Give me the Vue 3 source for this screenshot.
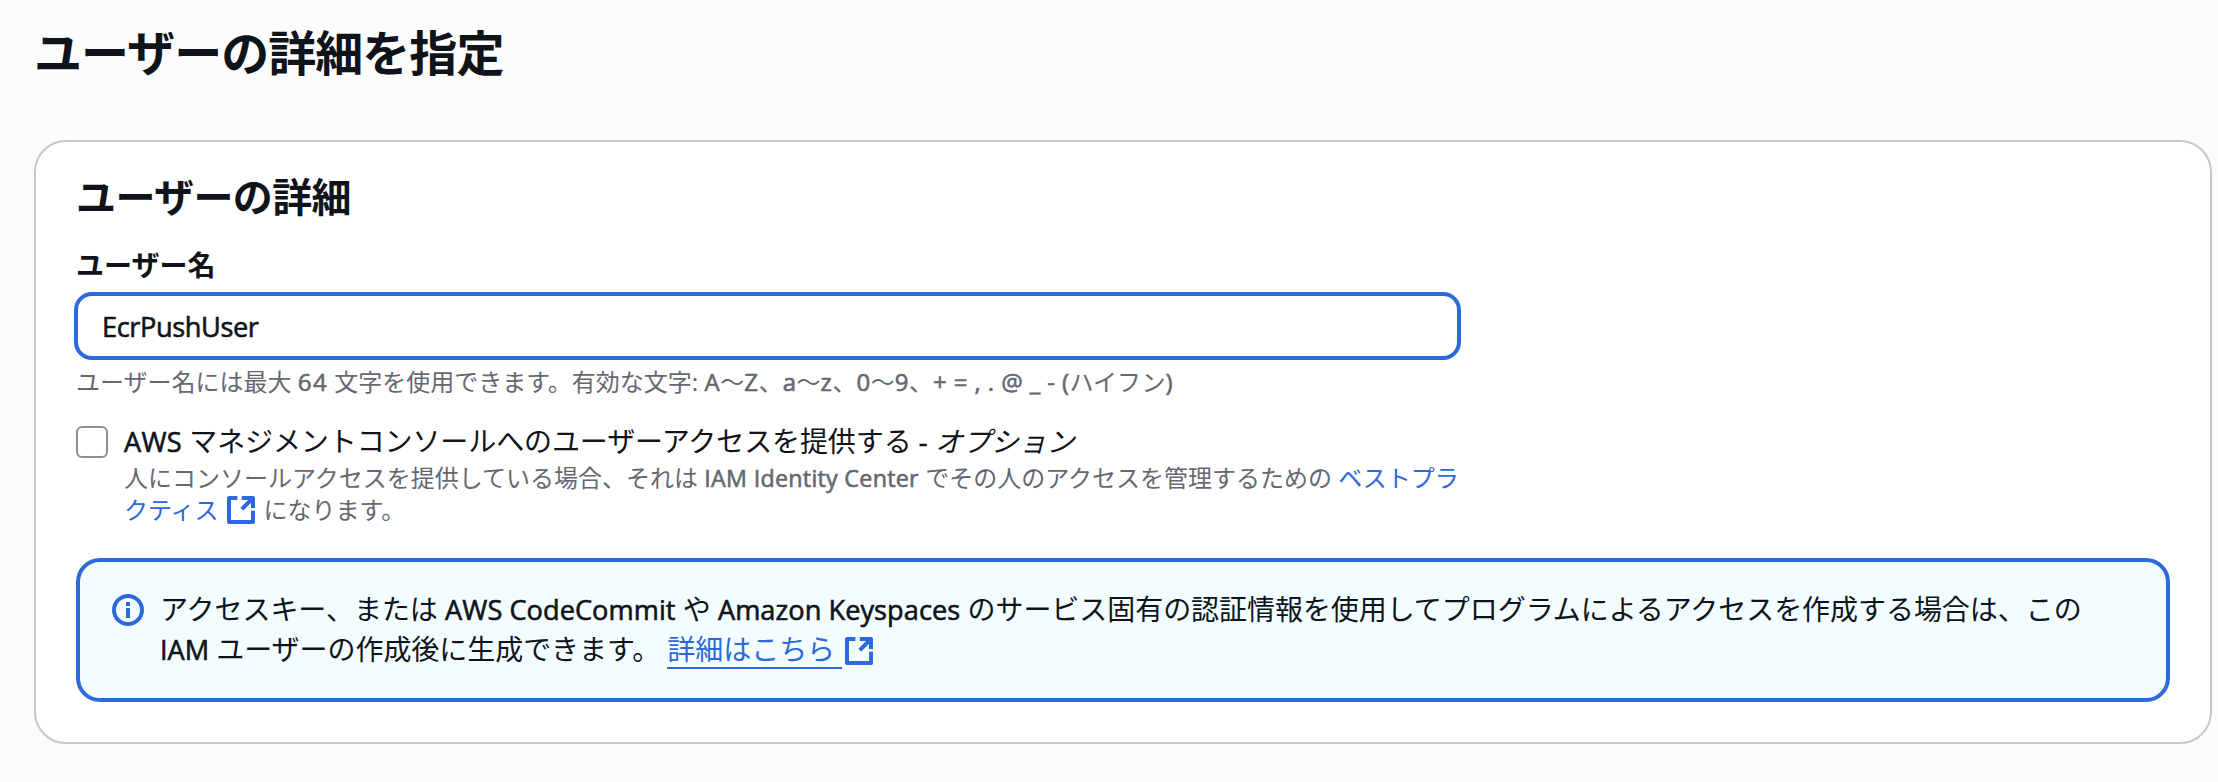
<script setup>
</script>

<template>
  <main class="page">
    <h1>ユーザーの詳細を指定</h1>
    <section class="card">
      <h2>ユーザーの詳細</h2>
      <div class="field">
        <label class="label" for="user-name">ユーザー名</label>
        <div class="input" id="user-name"><span class="l">EcrPushUser</span></div>
        <p class="hint">ユーザー名には最大 <span class="l num">64</span> 文字を使用できます。有効な文字: <span class="l">A</span>〜<span class="l">Z</span>、<span class="l">a</span>〜<span class="l">z</span>、<span class="l">0</span>〜<span class="l">9</span>、<span class="l sym">+ = , . @ _ - (</span>ハイフン<span class="l">)</span></p>
      </div>
      <div class="check">
        <span class="box"></span>
        <div class="check-text">
          <p class="check-label"><span class="l">AWS</span> マネジメントコンソールへのユーザーアクセスを提供する <span class="l">-</span> <i>オプション</i></p>
          <p class="desc">人にコンソールアクセスを提供している場合、それは <span class="l">IAM Identity Center</span> でその人のアクセスを管理するための <a>ベストプラ</a></p>
          <p class="desc"><a>クティス<svg class="ext ext-a" viewBox="0 0 16 16"><path d="M8.4 2H14v5M8.4 7.6L14 2M14 8.4V14H2V2h4.2" /></svg></a>になります。</p>
        </div>
      </div>
      <div class="alert">
        <svg class="info" viewBox="0 0 16 16"><circle cx="8" cy="8" r="7" /><path d="M8 12V7M8 6V4" /></svg>
        <div class="alert-text">
          <p class="one">アクセスキー、または <span class="l">AWS CodeCommit</span> や <span class="l">Amazon Keyspaces</span> のサービス固有の認証情報を使用してプログラムによるアクセスを作成する場合は、この</p>
          <p><span class="l">IAM</span> ユーザーの作成後に生成できます。 <a class="more">詳細はこちら&nbsp;</a><svg class="ext ext-b" viewBox="0 0 16 16"><path d="M8.4 2H14v5M8.4 7.6L14 2M14 8.4V14H2V2h4.2" /></svg></p>
        </div>
      </div>
    </section>
  </main>
</template>

<style>
body {
  background: #fcfcfd;
}
</style>

<style scoped>
.page {
  box-sizing: border-box;
  height: 782px;
  padding: 20px 6px 0 34px;
  color: #0f141a;
  font-family: "Noto Sans", "Noto Sans CJK JP", sans-serif;
  font-size: 28px;
}
h1, h2, p {
  margin: 0;
  white-space: nowrap;
}
h1 {
  height: 60px;
  line-height: 60px;
  font-size: 48px;
  letter-spacing: -0.96px;
  font-family: "Noto Sans CJK JP", sans-serif;
}
.card {
  box-sizing: border-box;
  height: 604px;
  margin-top: 60px;
  padding: 29px 40px 0;
  border: 2px solid #c6c6cd;
  border-radius: 32px;
  background: #fff;
}
h2 {
  line-height: 48px;
  font-size: 40px;
  letter-spacing: -0.6px;
  font-family: "Noto Sans CJK JP", sans-serif;
}
.label {
  display: block;
  margin-top: 26px;
  line-height: 40px;
  font-weight: 700;
}
.input {
  box-sizing: border-box;
  display: flex;
  align-items: center;
  width: 1387px;
  height: 68px;
  margin: 7px 0 0 -2px;
  padding-left: 24px;
  border: 4px solid #2c69da;
  border-radius: 18px;
}
.l {
  font-family: "Open Sans", "Noto Sans", sans-serif;
  font-size: 0.97em;
  -webkit-text-stroke: 0.6px currentColor;
}
.input .l {
  letter-spacing: -0.4px;
}
.hint {
  margin-top: 6px;
  line-height: 32px;
  font-size: 24px;
  color: #656871;
}
.hint .l {
  font-size: 1em;
  letter-spacing: 0.6px;
}
.hint .num {
  letter-spacing: 1.4px;
}
.hint .sym {
  letter-spacing: 0.4px;
}
.check {
  display: flex;
  gap: 16px;
  margin-top: 24px;
}
.box {
  box-sizing: border-box;
  width: 32px;
  height: 32px;
  margin-top: 4px;
  border: 2px solid #8c8c94;
  border-radius: 6px;
}
.check-label {
  height: 40px;
  line-height: 38px;
  letter-spacing: -0.1px;
}
.check-label .l {
  letter-spacing: 0.3px;
}
.check-label i {
  font-style: oblique;
}
.desc {
  height: 32px;
  line-height: 32px;
  font-size: 24px;
  color: #656871;
}
.desc .l {
  letter-spacing: 0.28px;
}
a {
  color: #2c69da;
}
.ext {
  width: 32px;
  height: 32px;
  vertical-align: -7px;
  fill: none;
  stroke: #2c69da;
  stroke-width: 2;
  stroke-linejoin: round;
}
.ext-a {
  margin: 0 7px 0 6px;
}
.ext-b {
  margin-left: 1px;
}
.alert {
  box-sizing: border-box;
  display: flex;
  gap: 16px;
  height: 144px;
  margin-top: 32px;
  padding: 28px 32px;
  border: 4px solid #2c69da;
  border-radius: 24px;
  background: #f3fcff;
}
.info {
  flex: none;
  width: 32px;
  height: 32px;
  margin-top: 4px;
  fill: none;
  stroke: #2c69da;
  stroke-width: 2;
}
.alert-text {
  margin-top: -1px;
}
.alert p {
  height: 40px;
  line-height: 40px;
  letter-spacing: -0.05px;
}
.alert .one .l {
  letter-spacing: 0.05px;
}
.more {
  display: inline-block;
  box-sizing: border-box;
  height: 40px;
  border-bottom: 2px solid #2c69da;
}
</style>
